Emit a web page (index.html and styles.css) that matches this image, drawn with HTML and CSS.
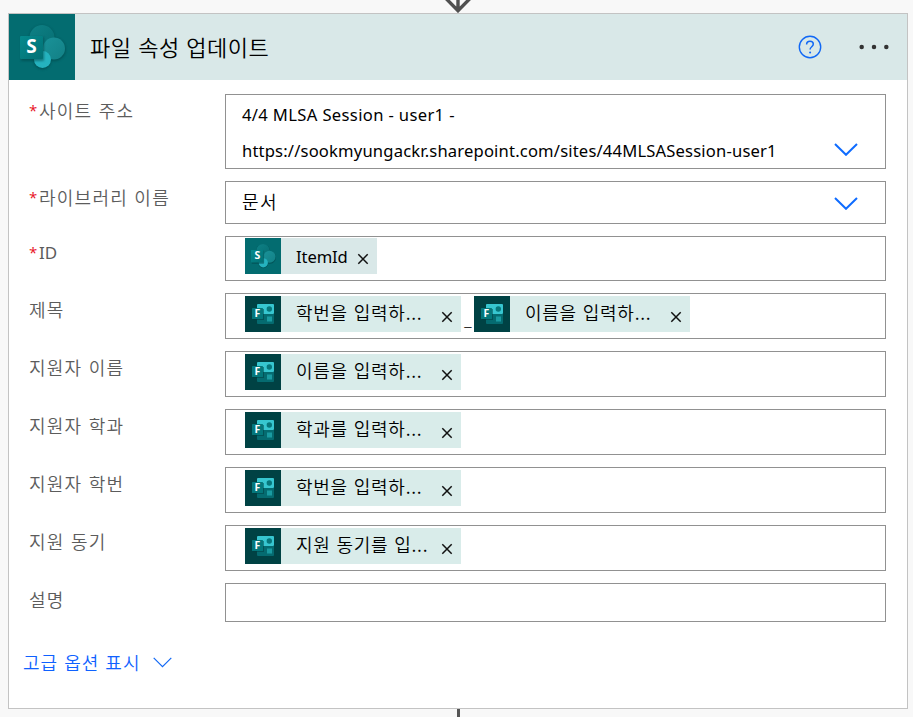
FILE: index.html
```html
<!DOCTYPE html>
<html lang="ko">
<head>
<meta charset="utf-8">
<title>파일 속성 업데이트</title>
<link rel="stylesheet" href="styles.css">
</head>
<body>
<svg class="defs" width="0" height="0" aria-hidden="true">
  <defs>
    <linearGradient id="sg0" x1="0" y1="0" x2="1" y2="1"><stop offset="0" stop-color="#0e8186"/><stop offset="1" stop-color="#066d71"/></linearGradient>
    <linearGradient id="sg2" x1="0" y1="0" x2="1" y2="1"><stop offset="0" stop-color="#1a9299"/><stop offset="1" stop-color="#128085"/></linearGradient>
    <linearGradient id="sg3" x1="0" y1="0" x2="1" y2="1"><stop offset="0" stop-color="#058a8d"/><stop offset="1" stop-color="#027074"/></linearGradient>
    <filter id="soft" x="-30%" y="-30%" width="160%" height="160%"><feGaussianBlur stdDeviation="1.3"/></filter>
  </defs>
  <symbol id="sharepoint" viewBox="0 0 66 66">
    <rect width="66" height="66" fill="#036c70"/>
    <g fill="#003f43" opacity=".5" filter="url(#soft)"><circle cx="33" cy="24.500" r="13"/><circle cx="45" cy="35.500" r="11.800"/><circle cx="33.500" cy="46.500" r="9"/></g>
    <circle cx="33" cy="23.500" r="12.500" fill="url(#sg0)"/>
    <circle cx="45" cy="34.500" r="11" fill="url(#sg2)"/>
    <circle cx="33.500" cy="45.500" r="8.500" fill="#25b2be"/>
    <rect x="12" y="23" width="23" height="24" rx="1" fill="#003f43" opacity=".5" filter="url(#soft)"/>
    <rect x="11" y="22" width="23" height="23" rx="1" fill="url(#sg3)"/>
  </symbol>
  <symbol id="forms" viewBox="0 0 36 36">
    <rect width="36" height="36" fill="#004244"/>
    <rect x="12" y="8" width="17" height="10" rx="1" fill="#37c6d0"/>
    <path d="M12 18h17v9a1 1 0 0 1-1 1H13a1 1 0 0 1-1-1z" fill="#056b70"/>
    <circle cx="24.300" cy="13" r="2.700" fill="#07777c"/>
    <rect x="22" y="20.500" width="5" height="5" fill="#1a9ba1"/>
    <rect x="8" y="13" width="11" height="11" fill="#003c3e" opacity=".5"/>
    <rect x="7" y="12" width="11" height="11" rx=".6" fill="#04777b"/>
  </symbol>
  <symbol id="cross" viewBox="0 0 12 12"><path d="M1.300 1.300l9.400 9.400M10.700 1.300l-9.400 9.400" fill="none" stroke="#111" stroke-width="1.500"/></symbol>
  <symbol id="chevron" viewBox="0 0 24 13"><path d="M1 1l11 10.800L23 1" fill="none" stroke="#0f6cff" stroke-width="2"/></symbol>
</svg>

<div class="connector connector-top">
  <svg width="28" height="13" viewBox="0 0 28 13"><path d="M14 0v11M1.500-2L14 10.700 26.500-2" fill="none" stroke="#505050" stroke-width="3.400"/></svg>
</div>

<main class="card">
  <header class="head">
    <span class="head-icon"><svg><use href="#sharepoint"/></svg><b>S</b></span>
    <h1 class="title">파일 속성 업데이트</h1>
    <svg class="help" viewBox="0 0 24 24"><circle cx="12" cy="12" r="10.700" fill="none" stroke="#1168f5" stroke-width="1.400"/><path d="M8.600 9.500c0-2 1.300-3.300 3.400-3.300s3.300 1.200 3.300 2.900c0 2.600-3.200 2.800-3.200 5.400" fill="none" stroke="#1168f5" stroke-width="1.500"/><circle cx="12.100" cy="17.500" r="1" fill="#1168f5"/></svg>
    <svg class="more" viewBox="0 0 30 6"><g fill="#333"><circle cx="2.700" cy="3" r="2.250"/><circle cx="15" cy="3" r="2.250"/><circle cx="27.300" cy="3" r="2.250"/></g></svg>
  </header>

  <section class="form">
    <div class="label"><i class="req">*</i><span>사이트 주소</span></div>
    <div class="field select site">
      <div class="value latin"><span class="site-name">4/4 MLSA Session - user1 -</span><br><span class="url">https://sookmyungackr.sharepoint.com/sites/44MLSASession-user1</span></div>
      <svg class="chev"><use href="#chevron"/></svg>
    </div>

    <div class="label"><i class="req">*</i><span>라이브러리 이름</span></div>
    <div class="field select library">
      <div class="value">문서</div>
      <svg class="chev"><use href="#chevron"/></svg>
    </div>

    <div class="label id-label"><i class="req">*</i><span class="latin">ID</span></div>
    <div class="field id">
      <span class="token sp"><span class="icon"><svg><use href="#sharepoint"/></svg><b>S</b></span><span class="name latin">ItemId</span><svg class="x"><use href="#cross"/></svg></span>
    </div>

    <div class="label">제목</div>
    <div class="field tokens">
      <span class="token"><span class="icon"><svg><use href="#forms"/></svg><b>F</b></span><span class="name">학번을 입력하...</span><svg class="x"><use href="#cross"/></svg></span><span class="sep">_</span><span class="token"><span class="icon"><svg><use href="#forms"/></svg><b>F</b></span><span class="name">이름을 입력하...</span><svg class="x"><use href="#cross"/></svg></span>
    </div>

    <div class="label">지원자 이름</div>
    <div class="field tokens">
      <span class="token"><span class="icon"><svg><use href="#forms"/></svg><b>F</b></span><span class="name">이름을 입력하...</span><svg class="x"><use href="#cross"/></svg></span>
    </div>

    <div class="label">지원자 학과</div>
    <div class="field tokens">
      <span class="token"><span class="icon"><svg><use href="#forms"/></svg><b>F</b></span><span class="name">학과를 입력하...</span><svg class="x"><use href="#cross"/></svg></span>
    </div>

    <div class="label">지원자 학번</div>
    <div class="field tokens">
      <span class="token"><span class="icon"><svg><use href="#forms"/></svg><b>F</b></span><span class="name">학번을 입력하...</span><svg class="x"><use href="#cross"/></svg></span>
    </div>

    <div class="label">지원 동기</div>
    <div class="field tokens">
      <span class="token"><span class="icon"><svg><use href="#forms"/></svg><b>F</b></span><span class="name">지원 동기를 입...</span><svg class="x"><use href="#cross"/></svg></span>
    </div>

    <div class="label">설명</div>
    <div class="field empty"></div>
  </section>

  <div class="advanced"><span>고급 옵션 표시</span><svg viewBox="0 0 19 11"><path d="M.7.900l8.800 8.700L18.300.900" fill="none" stroke="#1168f5" stroke-width="1.200"/></svg></div>
</main>

<div class="connector connector-bottom"><i></i></div>
</body>
</html>
```

FILE: styles.css
```css
* { box-sizing: border-box; }

body {
  margin: 0;
  height: 717px;
  overflow: hidden;
  background: #f8f8f8;
  font-family: "Noto Sans CJK KR DemiLight", "Noto Sans CJK KR", sans-serif;
  font-weight: 350;
  font-size: 18px;
  letter-spacing: 0.9px;
  color: #000;
}

svg { display: block; flex: none; }
.defs { position: absolute; }

.latin {
  font-family: "Noto Sans", "Open Sans", sans-serif;
  font-weight: 400;
  font-size: 16.6px;
  letter-spacing: 0;
}

.connector { display: flex; justify-content: center; margin-left: 3px; }
.connector-top { height: 13px; }
.connector-bottom i { width: 3px; height: 8px; background: #555; }

.card {
  width: 900px;
  height: 696px;
  margin-left: 8px;
  border: 1px solid #c3c3c3;
  background: #fff;
}

.head {
  display: flex;
  align-items: center;
  height: 66px;
  padding-right: 18px;
  background: #d9e8e8;
}

/* Product icons: artwork with its letter laid over the tile */
.head-icon, .icon { position: relative; flex: none; }
.head-icon, .head-icon svg { width: 66px; height: 66px; }
.icon, .icon svg { width: 36px; height: 36px; }
.head-icon b, .icon b {
  position: absolute;
  font-family: "Open Sans", sans-serif;
  font-weight: 700;
  letter-spacing: 0;
  text-align: center;
  color: #fff;
}
.head-icon b { left: 11px; top: 20px; width: 23px; font-size: 19px; line-height: 25px; }
.icon b { left: 7px; top: 11px; width: 11px; font-size: 10.5px; line-height: 13px; }
.sp .icon b { left: 6px; width: 13px; top: 11px; font-size: 10.5px; }

.title {
  flex: 1;
  margin: -3px 0 0 15px;
  font-size: 22px;
  line-height: 30px;
  font-weight: 350;
  letter-spacing: 0.5px;
}
.help { width: 24px; height: 24px; margin: -1px 37px 0 0; }
.more { width: 30px; height: 6px; margin-top: -1px; }

.form {
  display: grid;
  grid-template-columns: 196px 661px;
  grid-template-rows: 75px 43px 45px repeat(5, 46px) 39px;
  row-gap: 12px;
  padding: 14px 0 0 20px;
}

.label {
  display: flex;
  height: 32px;
  line-height: 32px;
  letter-spacing: 1.25px;
  color: #5c5c5c;
}
.label .latin { line-height: 34px; font-size: 17px; }
.req {
  width: 10px;
  font: normal 400 15px/33px "Open Sans", sans-serif;
  letter-spacing: 0;
  color: #e81123;
}

.field {
  display: flex;
  align-items: flex-start;
  border: 1px solid #919191;
  background: #fff;
}
.select { justify-content: space-between; padding: 1px 27px 0 16px; }
.value { line-height: 36px; }
.library .value { letter-spacing: 1.5px; }
.site .value { padding-top: 1px; line-height: 36px; }
.site-name { letter-spacing: 0.35px; }
.url { letter-spacing: 0.17px; }
.chev { width: 24px; height: 13px; margin-top: 14px; }
.site .chev { margin-top: 47px; }

.id { padding: 1px 0 0 19px; }
.tokens { padding: 2px 0 0 19px; }
.token {
  display: flex;
  width: 216px;
  height: 36px;
  background: #d9ecea;
}
.token.sp { width: 132px; background: #d9e8e8; }
.name { flex: 1; margin-left: 15px; line-height: 33px; letter-spacing: 0.75px; white-space: nowrap; }
.name.latin { line-height: 38px; letter-spacing: -0.1px; }
.x { width: 12px; height: 12px; margin: 15px 8px 0 0; }
.sep { width: 13px; padding-left: 3px; line-height: 48px; font-size: 14px; letter-spacing: 0; }

.advanced {
  display: flex;
  align-items: center;
  margin: 25px 0 0 14px;
  height: 30px;
  letter-spacing: 1px;
  color: #0f62ff;
}
.advanced svg { width: 19px; height: 11px; margin-left: 13px; }
```
